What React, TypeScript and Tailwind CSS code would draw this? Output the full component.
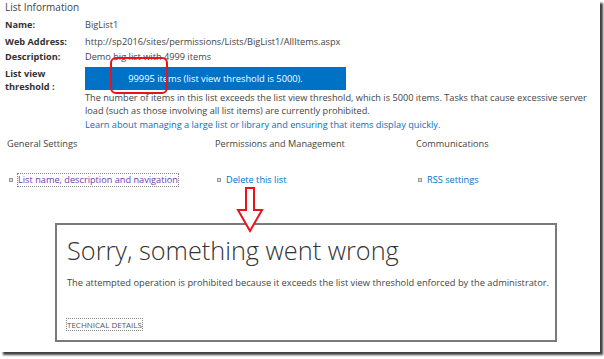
import React from "react";

const font = "font-['Open_Sans','Liberation_Sans',sans-serif]";

function Bullet() {
  return <span className="inline-block w-[4px] h-[4px] border border-[#999] bg-[#ddd] mr-[5px] align-middle" />;
}

export default function App() {
  return (
    <div className={`w-[604px] h-[359px] bg-white ${font}`}>
      <div className="relative w-[600px] h-[352px] bg-white shadow-[3px_3px_2px_rgba(0,0,0,0.75)] text-[#444]">
        <div className="pl-[5px]">
          <div className="text-[10px] leading-[14px]">List Information</div>
          <div className="grid grid-cols-[80px_1fr] text-[9.2px] whitespace-nowrap">
            <div className="mt-[4px] font-bold leading-[14px] text-[#333]">Name:</div>
            <div className="mt-[4px] leading-[14px]">BigList1</div>
            <div className="mt-[3px] font-bold leading-[14px] text-[#333]">Web Address:</div>
            <div className="mt-[3px] leading-[14px]">http://sp2016/sites/permissions/Lists/BigList1/AllItems.aspx</div>
            <div className="mt-[1px] font-bold leading-[14px] text-[#333]">Description:</div>
            <div className="mt-[1px] leading-[14px]">Demo big list with 4999 items</div>
            <div className="mt-[3px] font-bold leading-[13px] text-[#333]">
              List view
              <br />
              threshold :
            </div>
            <div className="mt-[3px]">
              <div className="w-[261px] h-[23px] bg-[#0072c6] text-white text-[9.3px] flex items-center justify-center leading-[13px]">
                99995 items (list view threshold is 5000).
              </div>
              <div className="leading-[13.5px] pt-[0.5px]">
                The number of items in this list exceeds the list view threshold, which is 5000 items. Tasks that cause excessive server
                <br />
                load (such as those involving all list items) are currently prohibited.
                <br />
                <span className="text-[#0072c6]">Learn about managing a large list or library and ensuring that items display quickly.</span>
              </div>
            </div>
          </div>
        </div>
        <div className="grid grid-cols-[208px_201px_1fr] pl-[7px] text-[9.2px] mt-[6px] whitespace-nowrap">
          <div className="leading-[14px]">General Settings</div>
          <div className="leading-[14px]">Permissions and Management</div>
          <div className="leading-[14px]">Communications</div>
          <div className="mt-[23px] pl-[2px] leading-[12px] flex items-center">
            <Bullet />
            <span className="text-[#6f3aa8] outline outline-1 outline-dotted outline-[#888]">List name, description and navigation</span>
          </div>
          <div className="mt-[23px] pl-[2px] leading-[12px] flex items-center">
            <Bullet />
            <span className="text-[#0072c6]">Delete this list</span>
          </div>
          <div className="mt-[23px] pl-[2px] leading-[12px] flex items-center">
            <Bullet />
            <span className="text-[#0072c6]">RSS settings</span>
          </div>
        </div>
        <div className="ml-[55px] mt-[37px] w-[502px] h-[119px] border-2 border-[#7a7a7a] pl-[10px] pt-[8px] flex flex-col whitespace-nowrap">
          <div className="text-[25.3px] font-light leading-[34px] text-[#333]">Sorry, something went wrong</div>
          <div className="mt-[9px] text-[9.3px] leading-[14px]">
            The attempted operation is prohibited because it exceeds the list view threshold enforced by the administrator.
          </div>
          <div className="mt-auto mb-[6px]">
            <span className="text-[8px] leading-[10px] outline outline-1 outline-dotted outline-[#888] text-[#555]">TECHNICAL DETAILS</span>
          </div>
        </div>

        <div className="absolute left-[110px] top-[57px] w-[58px] h-[37px] border-2 border-[#e8141c] rounded-[6px]" />
        <svg className="absolute left-[236px] top-[186px]" width="28" height="48" viewBox="0 0 28 48">
          <path d="M10 2 H18 V24 H26 L14 45 L2 24 H10 Z" fill="white" stroke="#e8141c" strokeWidth="2" strokeLinejoin="miter" />
        </svg>
      </div>
    </div>
  );
}
